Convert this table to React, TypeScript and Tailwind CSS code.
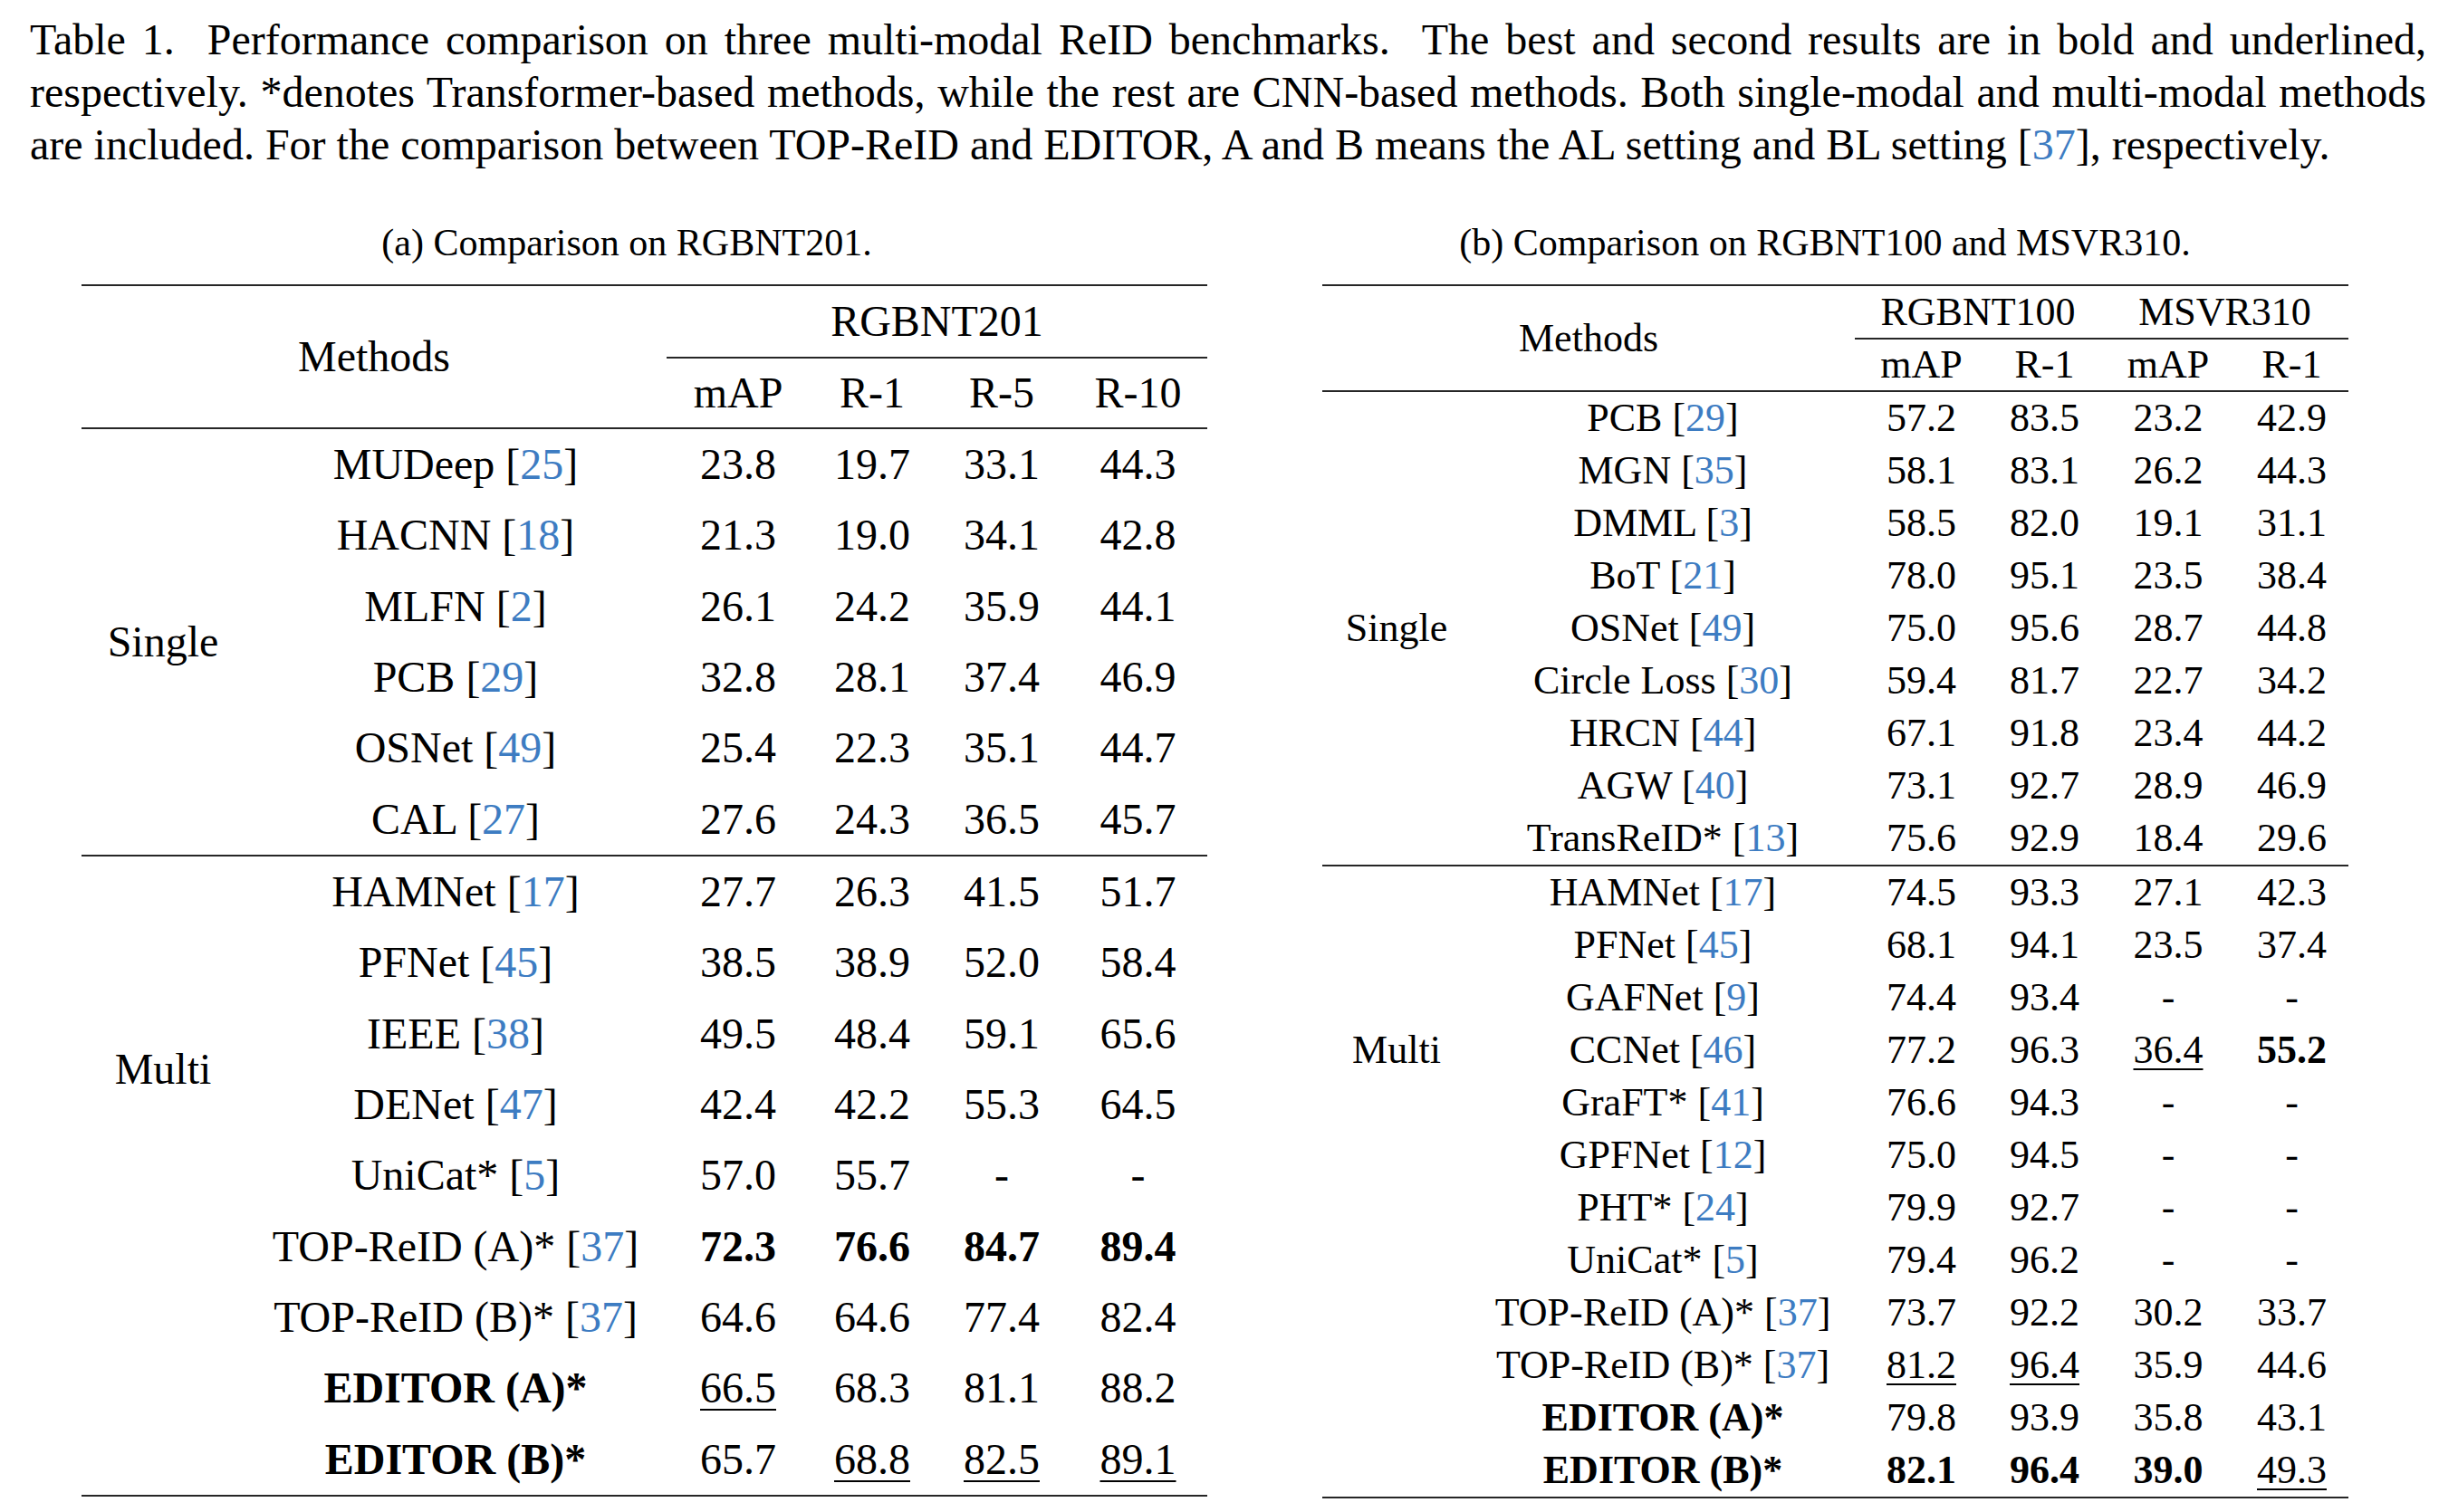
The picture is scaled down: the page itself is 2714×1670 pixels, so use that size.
import React from 'react';

type Row = { name: string; cite?: string; bold?: boolean; cells: string[] };

const CITE = 'text-[#3d7cc2]';

// left table: (a) RGBNT201
const leftSingle: Row[] = [
  { name: 'MUDeep', cite: '25', cells: ['23.8', '19.7', '33.1', '44.3'] },
  { name: 'HACNN', cite: '18', cells: ['21.3', '19.0', '34.1', '42.8'] },
  { name: 'MLFN', cite: '2', cells: ['26.1', '24.2', '35.9', '44.1'] },
  { name: 'PCB', cite: '29', cells: ['32.8', '28.1', '37.4', '46.9'] },
  { name: 'OSNet', cite: '49', cells: ['25.4', '22.3', '35.1', '44.7'] },
  { name: 'CAL', cite: '27', cells: ['27.6', '24.3', '36.5', '45.7'] },
];

const leftMulti: Row[] = [
  { name: 'HAMNet', cite: '17', cells: ['27.7', '26.3', '41.5', '51.7'] },
  { name: 'PFNet', cite: '45', cells: ['38.5', '38.9', '52.0', '58.4'] },
  { name: 'IEEE', cite: '38', cells: ['49.5', '48.4', '59.1', '65.6'] },
  { name: 'DENet', cite: '47', cells: ['42.4', '42.2', '55.3', '64.5'] },
  { name: 'UniCat*', cite: '5', cells: ['57.0', '55.7', '-', '-'] },
  { name: 'TOP-ReID (A)*', cite: '37', cells: ['b:72.3', 'b:76.6', 'b:84.7', 'b:89.4'] },
  { name: 'TOP-ReID (B)*', cite: '37', cells: ['64.6', '64.6', '77.4', '82.4'] },
  { name: 'EDITOR (A)*', bold: true, cells: ['u:66.5', '68.3', '81.1', '88.2'] },
  { name: 'EDITOR (B)*', bold: true, cells: ['65.7', 'u:68.8', 'u:82.5', 'u:89.1'] },
];

// right table: (b) RGBNT100 / MSVR310
const rightSingle: Row[] = [
  { name: 'PCB', cite: '29', cells: ['57.2', '83.5', '23.2', '42.9'] },
  { name: 'MGN', cite: '35', cells: ['58.1', '83.1', '26.2', '44.3'] },
  { name: 'DMML', cite: '3', cells: ['58.5', '82.0', '19.1', '31.1'] },
  { name: 'BoT', cite: '21', cells: ['78.0', '95.1', '23.5', '38.4'] },
  { name: 'OSNet', cite: '49', cells: ['75.0', '95.6', '28.7', '44.8'] },
  { name: 'Circle Loss', cite: '30', cells: ['59.4', '81.7', '22.7', '34.2'] },
  { name: 'HRCN', cite: '44', cells: ['67.1', '91.8', '23.4', '44.2'] },
  { name: 'AGW', cite: '40', cells: ['73.1', '92.7', '28.9', '46.9'] },
  { name: 'TransReID*', cite: '13', cells: ['75.6', '92.9', '18.4', '29.6'] },
];

const rightMulti: Row[] = [
  { name: 'HAMNet', cite: '17', cells: ['74.5', '93.3', '27.1', '42.3'] },
  { name: 'PFNet', cite: '45', cells: ['68.1', '94.1', '23.5', '37.4'] },
  { name: 'GAFNet', cite: '9', cells: ['74.4', '93.4', '-', '-'] },
  { name: 'CCNet', cite: '46', cells: ['77.2', '96.3', 'u:36.4', 'b:55.2'] },
  { name: 'GraFT*', cite: '41', cells: ['76.6', '94.3', '-', '-'] },
  { name: 'GPFNet', cite: '12', cells: ['75.0', '94.5', '-', '-'] },
  { name: 'PHT*', cite: '24', cells: ['79.9', '92.7', '-', '-'] },
  { name: 'UniCat*', cite: '5', cells: ['79.4', '96.2', '-', '-'] },
  { name: 'TOP-ReID (A)*', cite: '37', cells: ['73.7', '92.2', '30.2', '33.7'] },
  { name: 'TOP-ReID (B)*', cite: '37', cells: ['u:81.2', 'u:96.4', '35.9', '44.6'] },
  { name: 'EDITOR (A)*', bold: true, cells: ['79.8', '93.9', '35.8', '43.1'] },
  { name: 'EDITOR (B)*', bold: true, cells: ['b:82.1', 'b:96.4', 'b:39.0', 'u:49.3'] },
];

type Layout = {
  catW: string;
  methodW: string;
  cols: string[];
  rowH: string;
  ul: string;
};

const left: Layout = {
  catW: 'w-[180px]',
  methodW: 'w-[466px]',
  cols: ['w-[158px]', 'w-[138px]', 'w-[148px]', 'w-[153px]'],
  rowH: 'h-[78.3px]',
  ul: 'underline-offset-[7px]',
};

const right: Layout = {
  catW: 'w-[164px]',
  methodW: 'w-[424px]',
  cols: ['w-[147px]', 'w-[125px]', 'w-[148px]', 'w-[125px]'],
  rowH: 'h-[58px]',
  ul: 'underline-offset-[6px]',
};

function Rule() {
  return <div className="h-[2px] bg-[#262626]" />;
}

function Method({ row }: { row: Row }) {
  return (
    <span className={row.bold ? 'font-bold' : ''}>
      {row.name}
      {row.cite && (
        <>
          {' '}[<span className={CITE}>{row.cite}</span>]
        </>
      )}
    </span>
  );
}

function Value({ v, ul }: { v: string; ul: string }) {
  if (v.startsWith('b:')) return <span className="font-bold">{v.slice(2)}</span>;
  if (v.startsWith('u:'))
    return <span className={`underline decoration-[2px] ${ul}`}>{v.slice(2)}</span>;
  return <span>{v}</span>;
}

function Group({ label, labelH, rows, lay }: { label: string; labelH: string; rows: Row[]; lay: Layout }) {
  return (
    <div className="flex">
      <div className={lay.catW}>
        <div className={`${labelH} flex items-center justify-center`}>{label}</div>
      </div>
      <div className="flex flex-col">
        {rows.map((r) => (
          <div key={r.name + r.cells[0]} className={`flex items-center ${lay.rowH}`}>
            <div className={`${lay.methodW} text-center whitespace-nowrap`}>
              <Method row={r} />
            </div>
            {r.cells.map((c, i) => (
              <div key={i} className={`${lay.cols[i]} text-center`}>
                <Value v={c} ul={lay.ul} />
              </div>
            ))}
          </div>
        ))}
      </div>
    </div>
  );
}

function TableA() {
  return (
    <div className="ml-[90px] mt-[21px] w-[1243px] text-[48px] leading-none">
      <Rule />
      <div className="flex">
        <div className="w-[646px] h-[156px] flex items-center justify-center">Methods</div>
        <div className="w-[597px] flex flex-col">
          <div className="h-[78px] flex items-center justify-center">RGBNT201</div>
          <Rule />
          <div className="h-[76px] flex items-center">
            <div className="w-[158px] text-center">mAP</div>
            <div className="w-[138px] text-center">R-1</div>
            <div className="w-[148px] text-center">R-5</div>
            <div className="w-[153px] text-center">R-10</div>
          </div>
        </div>
      </div>
      <Rule />
      <Group label="Single" labelH="h-[470px]" rows={leftSingle} lay={left} />
      <Rule />
      <Group label="Multi" labelH="h-[470px]" rows={leftMulti} lay={left} />
      <Rule />
    </div>
  );
}

function TableB() {
  return (
    <div className="ml-[76px] mt-[21px] w-[1133px] text-[44px] leading-none">
      <Rule />
      <div className="flex">
        <div className="w-[588px] h-[115px] flex items-center justify-center">Methods</div>
        <div className="w-[545px] flex flex-col">
          <div className="h-[57px] flex items-center">
            <div className="w-[272px] text-center">RGBNT100</div>
            <div className="w-[273px] text-center">MSVR310</div>
          </div>
          <Rule />
          <div className="h-[56px] flex items-center">
            <div className="w-[147px] text-center">mAP</div>
            <div className="w-[125px] text-center">R-1</div>
            <div className="w-[148px] text-center">mAP</div>
            <div className="w-[125px] text-center">R-1</div>
          </div>
        </div>
      </div>
      <Rule />
      <Group label="Single" labelH="h-[522px]" rows={rightSingle} lay={right} />
      <Rule />
      <Group label="Multi" labelH="h-[406px]" rows={rightMulti} lay={right} />
      <Rule />
    </div>
  );
}

export default function App() {
  return (
    <div className="w-[2714px] h-[1670px] overflow-hidden bg-white text-black font-['Liberation_Serif','Times_New_Roman',serif]">
      {/* Caption */}
      <div className="pt-[15px] pl-[33px] w-[2679px] text-[48px] leading-[58px]">
        <div className="text-justify [text-align-last:justify]">
          Table 1.&nbsp; Performance comparison on three multi-modal ReID benchmarks.&nbsp; The best and second results are in bold and underlined,
        </div>
        <div className="text-justify [text-align-last:justify]">
          respectively. *denotes Transformer-based methods, while the rest are CNN-based methods. Both single-modal and multi-modal methods
        </div>
        <div>
          are included. For the comparison between TOP-ReID and EDITOR, A and B means the AL setting and BL setting [<span className={CITE}>37</span>], respectively.
        </div>
      </div>

      <div className="flex mt-[54px]">
        <div className="w-[1384px] flex flex-col">
          <div className="text-center text-[42px] leading-[50px]">(a) Comparison on RGBNT201.</div>
          <TableA />
        </div>
        <div className="w-[1262px] flex flex-col">
          <div className="text-center text-[42px] leading-[50px]">(b) Comparison on RGBNT100 and MSVR310.</div>
          <TableB />
        </div>
      </div>
    </div>
  );
}
